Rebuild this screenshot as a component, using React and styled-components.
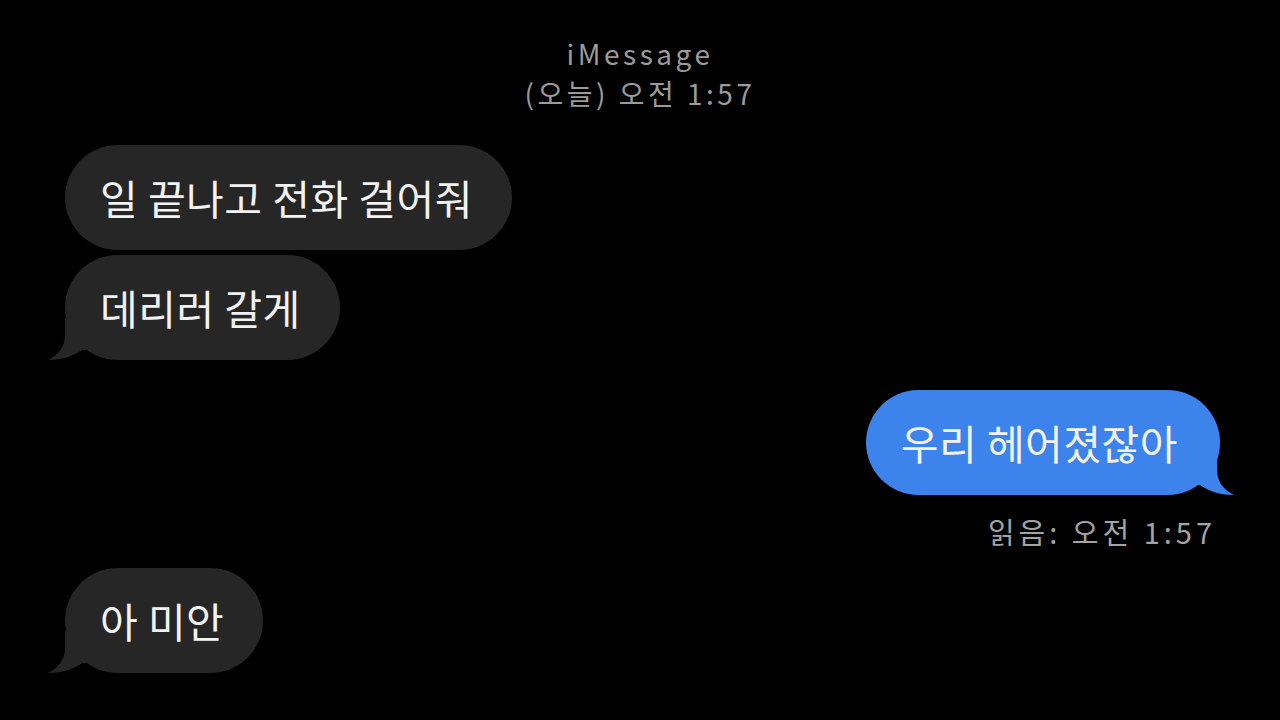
import React from 'react';
import styled, { createGlobalStyle } from 'styled-components';

const GlobalStyle = createGlobalStyle`
  html, body {
    margin: 0;
    padding: 0;
    background: #000;
  }
  body {
    font-family: "Noto Sans CJK KR", "Noto Sans", sans-serif;
  }
`;

const Screen = styled.div`
  width: 1280px;
  height: 720px;
  background: #000;
  display: flex;
  flex-direction: column;
  padding: 33px 60px 0 65px;
  box-sizing: border-box;
  overflow: hidden;
`;

const Header = styled.div`
  display: flex;
  flex-direction: column;
  align-items: center;
  color: #9b9b9b;
  font-size: 28px;
  line-height: 40px;
  letter-spacing: 3.5px;
  margin-left: -5px;
`;

const Row = styled.div`
  display: flex;
  justify-content: ${(p) => (p.$mine ? 'flex-end' : 'flex-start')};
  margin-top: ${(p) => p.$gap}px;
`;

const Bubble = styled.div`
  position: relative;
  background: ${(p) => (p.$mine ? '#3d83ec' : '#262627')};
  color: #f2f2f2;
  font-size: 41px;
  line-height: 45px;
  letter-spacing: 0.5px;
  padding: 30px ${(p) => (p.$mine ? 42 : 39)}px 30px 35px;
  border-radius: 53px;
  white-space: nowrap;
`;

const Tail = styled.svg`
  position: absolute;
  bottom: 0;
  width: 45px;
  height: 45px;
  ${(p) => (p.$mine ? 'right: -14px; transform: scaleX(-1);' : 'left: -17px;')}
`;

const Receipt = styled.div`
  align-self: flex-end;
  margin-top: 18px;
  margin-right: 4px;
  color: #a3a3a3;
  font-size: 29px;
  line-height: 36px;
  letter-spacing: 4px;
`;

function Message({ mine, gap, tail, children }) {
  return (
    <Row $mine={mine} $gap={gap}>
      <Bubble $mine={mine}>
        {children}
        {tail && (
          <Tail $mine={mine} viewBox="0 0 45 45">
            <path
              d="M17 3 L17 20 C17 32 10 40 0 45 C12 45 24 42 34 35 L45 35 L45 3 Z"
              fill={mine ? '#3d83ec' : '#262627'}
            />
          </Tail>
        )}
      </Bubble>
    </Row>
  );
}

export default function App() {
  return (
    <>
      <GlobalStyle />
      <Screen>
        <Header>
          <span>iMessage</span>
          <span>(오늘) 오전 1:57</span>
        </Header>
        <Message gap={32}>일 끝나고 전화 걸어줘</Message>
        <Message gap={5} tail>데리러 갈게</Message>
        <Message gap={30} mine tail>우리 헤어졌잖아</Message>
        <Receipt>읽음: 오전 1:57</Receipt>
        <Message gap={19} tail>아 미안</Message>
      </Screen>
    </>
  );
}
